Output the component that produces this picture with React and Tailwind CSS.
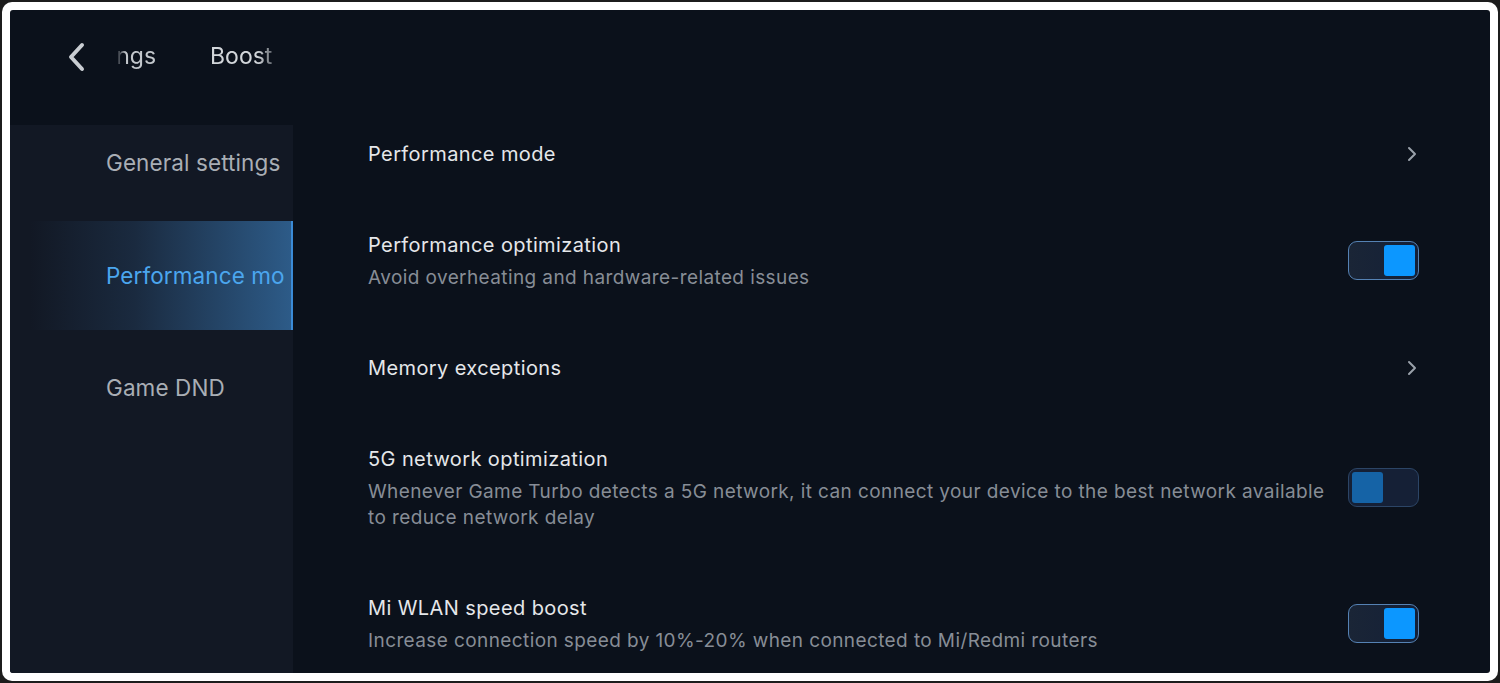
const rows = [
  { title: 'Performance mode', kind: 'link' },
  {
    title: 'Performance optimization',
    desc: ['Avoid overheating and hardware-related issues'],
    kind: 'toggle',
    on: true,
  },
  { title: 'Memory exceptions', kind: 'link' },
  {
    title: '5G network optimization',
    desc: [
      'Whenever Game Turbo detects a 5G network, it can connect your device to the best network available',
      'to reduce network delay',
    ],
    kind: 'toggle',
    on: false,
  },
  {
    title: 'Mi WLAN speed boost',
    desc: ['Increase connection speed by 10%-20% when connected to Mi/Redmi routers'],
    kind: 'toggle',
    on: true,
  },
];

function Chevron({ className }) {
  return (
    <svg viewBox="0 0 10 16" className={className} fill="none" stroke="currentColor" strokeWidth="2" strokeLinecap="round" strokeLinejoin="round">
      <path d="M2 2l6 6-6 6" />
    </svg>
  );
}

function Toggle({ on }) {
  return (
    <div
      className={`flex h-[39px] w-[71px] shrink-0 items-center rounded-[9px] border-[1.5px] p-[3px] ${
        on
          ? 'justify-end border-[#5582b4] bg-[linear-gradient(90deg,#1a2536,#142038)]'
          : 'justify-start border-[#2c4566] bg-[#152036]'
      }`}
    >
      <div className={`h-[31px] w-[31px] rounded-[3px] ${on ? 'bg-[#0c97ff]' : 'bg-[#1563a6]'}`} />
    </div>
  );
}

function Row({ row }) {
  return (
    <div className="flex items-center gap-[20px] py-[31.5px]">
      <div className="flex-1 whitespace-nowrap">
        <div className="text-[20px] leading-[28px] tracking-[0.4px] text-[#e5e7ea]">{row.title}</div>
        {row.desc && (
          <div className="mt-[6px] text-[19px] leading-[26px] tracking-[0.4px] text-[#878d96]">
            {row.desc.map((line) => (
              <div key={line}>{line}</div>
            ))}
          </div>
        )}
      </div>
      {row.kind === 'toggle' ? (
        <Toggle on={row.on} />
      ) : (
        <Chevron className="mr-[2px] h-[16px] w-[10px] text-[#9aa1aa]" />
      )}
    </div>
  );
}

export default function App() {
  return (
    <div className="h-[683px] w-[1500px] bg-[#1c1c1c] p-[2px]" style={{ fontFamily: 'Inter, "Noto Sans", sans-serif' }}>
      <div className="h-full w-full rounded-[10px] bg-white p-[8px]">
        <div className="flex h-full w-full overflow-hidden rounded-[3px] bg-[#0b111b]">
          {/* left column: tab strip + category list */}
          <div className="flex w-[283px] flex-col">
            <div className="flex h-[115px] items-center pb-[22px] pl-[56px]">
              <svg viewBox="0 0 20 30" className="h-[30px] w-[20px] text-[#c9cdd2]" fill="none" stroke="currentColor" strokeWidth="4" strokeLinecap="round" strokeLinejoin="round">
                <path d="M16 3L5 15l11 12" />
              </svg>
              <div className="ml-[30px] w-[170px] overflow-hidden [mask-image:linear-gradient(90deg,transparent_0px,black_10px,black_142px,transparent_168px)]">
                <div className="-ml-[48px] flex gap-[54px] whitespace-nowrap text-[23px] text-[#c3c7cc]">
                  <span>Settings</span>
                  <span className="text-[#d2d6da]">Boost</span>
                </div>
              </div>
            </div>
            <div className="flex flex-1 flex-col bg-[#121824] text-[22.5px] tracking-[0.1px]">
              <div className="flex h-[96px] items-center pb-[20px] pl-[96px] text-[#a9aeb5]">General settings</div>
              <div className="ml-[20px] flex h-[109px] items-center border-r-[2px] border-[#3b8bd6] bg-[linear-gradient(90deg,rgba(20,30,45,0)_0%,#1a2a3f_40%,#2d5b88_100%)] pl-[76px] text-[#4ba6ee]">
                <div className="w-[178px] overflow-hidden whitespace-nowrap">Performance mode</div>
              </div>
              <div className="flex h-[116px] items-center pl-[96px] text-[#a9aeb5]">Game DND</div>
            </div>
          </div>

          {/* settings list */}
          <div className="flex-1 pt-[98px] pl-[75px] pr-[71px]">
            {rows.map((row) => (
              <Row key={row.title} row={row} />
            ))}
          </div>
        </div>
      </div>
    </div>
  );
}
